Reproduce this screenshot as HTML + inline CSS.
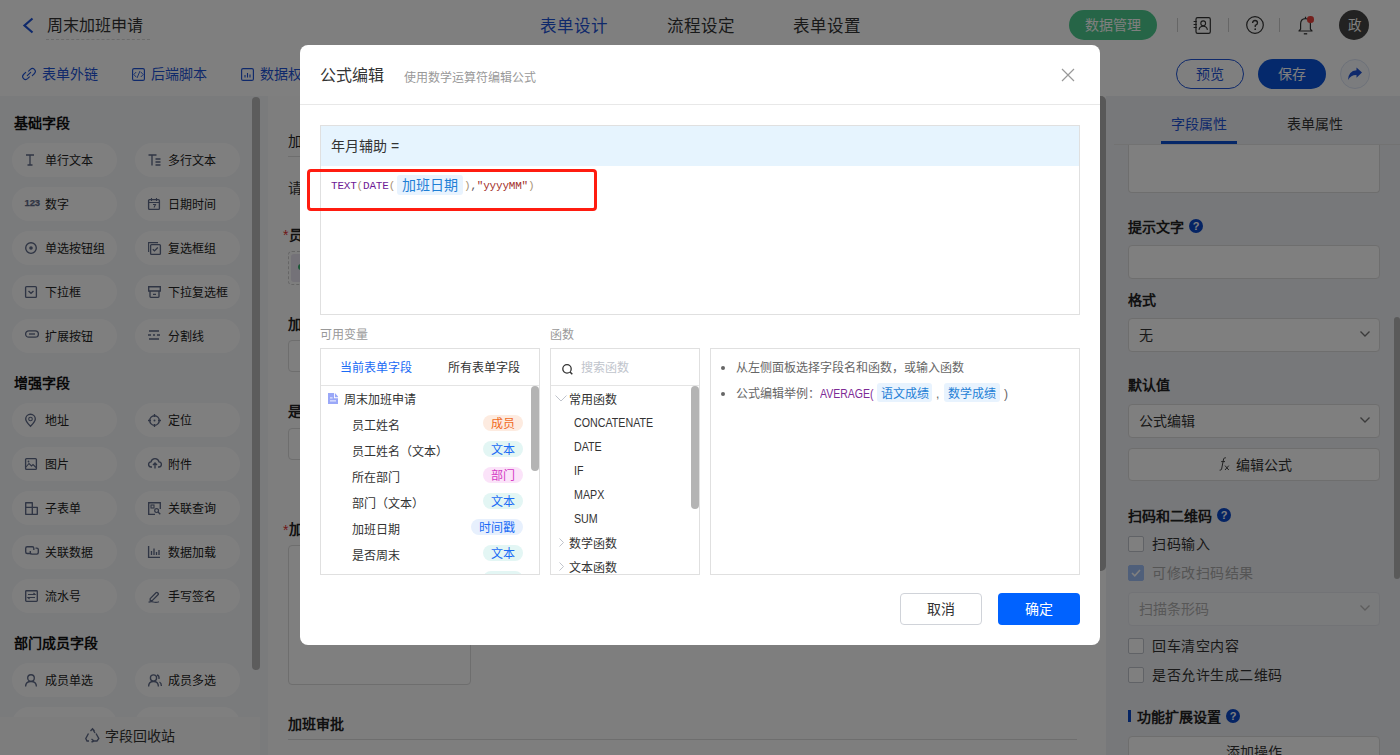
<!DOCTYPE html>
<html lang="zh-CN">
<head>
<meta charset="utf-8">
<style>
*{box-sizing:border-box;margin:0;padding:0}
html,body{width:1400px;height:755px;overflow:hidden;background:#fff}
body{font-family:"Liberation Sans",sans-serif;color:#333;position:relative;font-size:14px}
.abs{position:absolute}
.t{position:absolute;white-space:nowrap;line-height:1}
svg{position:absolute;overflow:visible}
/* top bar */
#top{left:0;top:0;width:1400px;height:51px;background:#fff;border-bottom:1px solid #ebebeb}
#bar2{left:0;top:50px;width:1400px;height:46px;background:#fff}
#side{left:0;top:96px;width:268px;height:659px;background:#f5f6f9}
#center{left:268px;top:96px;width:838px;height:659px;background:#fcfcfd}
#right{left:1106px;top:96px;width:294px;height:659px;background:#eff0f4}
.chip{position:absolute;width:105px;height:34px;border-radius:17px;background:#fff}
.chip span{position:absolute;left:33px;top:12px;font-size:12px;line-height:12px;color:#222}
.chip svg{left:13px;top:11px}
.sec{position:absolute;left:14px;font-size:14px;font-weight:bold;color:#111;line-height:14px}
.lbl{position:absolute;font-size:14px;font-weight:bold;color:#222;line-height:14px}
.inp{position:absolute;background:#fff;border:1px solid #dcdcdc;border-radius:4px}
.cb{position:absolute;width:16px;height:16px;border:1px solid #c0c4cc;border-radius:2px;background:#fff}
.qm{position:absolute;width:14px;height:14px;border-radius:7px;background:#0a48c8;color:#fff;font-size:11px;font-weight:bold;line-height:14px;text-align:center}
#overlay{left:0;top:0;width:1400px;height:755px;background:rgba(0,0,0,.5)}
#modal{left:300px;top:45px;width:800px;height:600px;background:#fff;border-radius:8px}
.tag{position:absolute;height:16px;border-radius:8px;font-size:12px;line-height:19px;text-align:center}
.vr{position:absolute;left:31px;font-size:12px;line-height:12px;color:#333}
.fn{position:absolute;left:23px;margin-top:-1px;font-size:12px;line-height:12px;color:#333;transform:scaleX(0.89);transform-origin:0 0}
</style>
</head>
<body>
<!-- ============ underlying page ============ -->
<div id="top" class="abs">
  <svg style="left:22px;top:17px" width="12" height="17" viewBox="0 0 12 17"><path d="M10.5 1.5 L2.5 8.5 L10.5 15.5" fill="none" stroke="#1e53d6" stroke-width="2.2"/></svg>
  <div class="t" style="left:47px;top:18px;font-size:16px;color:#333">周末加班申请</div>
  <div class="abs" style="left:46px;top:39px;width:104px;border-top:1px dashed #d8d8d8"></div>
  <div class="t" style="left:540px;top:18px;font-size:16.5px;color:#1e53d6">表单设计</div>
  <div class="t" style="left:667px;top:18px;font-size:16.5px;color:#333">流程设定</div>
  <div class="t" style="left:793px;top:18px;font-size:16.5px;color:#333">表单设置</div>
  <div class="abs" style="left:1069px;top:10px;width:88px;height:30px;border-radius:15px;background:#4ccb8e"></div>
  <div class="t" style="left:1085px;top:18px;font-size:14px;color:#fff">数据管理</div>
  <div class="abs" style="left:1177px;top:18px;width:1px;height:14px;background:#ccc"></div>
  <div class="abs" style="left:1228px;top:18px;width:1px;height:14px;background:#ccc"></div>
  <div class="abs" style="left:1279px;top:18px;width:1px;height:14px;background:#ccc"></div>
  <svg style="left:1193px;top:17px" width="18" height="17" viewBox="0 0 18 17"><rect x="3" y="0.7" width="14.3" height="15.6" rx="1.6" fill="none" stroke="#333" stroke-width="1.2"/><circle cx="10.2" cy="6.3" r="2.4" fill="none" stroke="#333" stroke-width="1.1"/><path d="M6 12.8 Q6.5 9.3 10.2 9.3 Q13.9 9.3 14.4 12.8" fill="none" stroke="#333" stroke-width="1.1"/><path d="M0.6 4.5h3.2M0.6 7.5h3.2M0.6 10.5h3.2" stroke="#333" stroke-width="1"/></svg>
  <svg style="left:1246px;top:16px" width="18" height="18" viewBox="0 0 18 18"><circle cx="9" cy="9" r="8.3" fill="none" stroke="#333" stroke-width="1.2"/><path d="M6.6 7.1 Q6.6 4.5 9 4.5 Q11.5 4.5 11.5 6.9 Q11.5 8.3 9.3 9.3 L9.2 11" fill="none" stroke="#333" stroke-width="1.3"/><circle cx="9.2" cy="13.2" r="0.85" fill="#333"/></svg>
  <svg style="left:1298px;top:16px" width="15" height="19" viewBox="0 0 15 19"><path d="M7.5 0.8v1.5M1 15 L2.6 13.2 L2.6 8 Q2.6 2.6 7.5 2.6 Q12.4 2.6 12.4 8 L12.4 13.2 L14 15 Z" fill="none" stroke="#333" stroke-width="1.2" stroke-linejoin="round"/><path d="M5.8 17.8h3.4" stroke="#333" stroke-width="1.3"/></svg>
  <div class="abs" style="left:1307px;top:16px;width:6.5px;height:6.5px;border-radius:3.25px;background:#e8413a"></div>
  <div class="abs" style="left:1339px;top:10px;width:30px;height:30px;border-radius:15px;background:#444"></div>
  <div class="t" style="left:1347.5px;top:18.5px;font-size:13.5px;color:#fff">政</div>
</div>
<div id="bar2" class="abs">
  <svg style="left:23px;top:68px;top:18px" width="12" height="12" viewBox="0 0 12 12"><path d="M5.6 3.2 L7.4 1.4 A2.9 2.9 0 0 1 11.5 5.5 L9.3 7.7 M6.4 8.8 L4.6 10.6 A2.9 2.9 0 0 1 0.5 6.5 L2.7 4.3 M4.3 7.7 L7.7 4.3" fill="none" stroke="#1e53d6" stroke-width="1.1" stroke-linecap="round"/></svg>
  <div class="t" style="left:42px;top:17px;font-size:14px;color:#1e53d6">表单外链</div>
  <svg style="left:132px;top:18px" width="13" height="13" viewBox="0 0 13 13"><rect x="0.6" y="0.6" width="11.8" height="11.8" rx="1.5" fill="none" stroke="#1e53d6" stroke-width="1.15"/><path d="M4.2 4 L1.8 6.5 L4.2 9 M8.8 4 L11.2 6.5 L8.8 9 M8 3 L5 10" fill="none" stroke="#1e53d6" stroke-width="0.9"/></svg>
  <div class="t" style="left:151px;top:17px;font-size:14px;color:#1e53d6">后端脚本</div>
  <svg style="left:241px;top:18px" width="13" height="13" viewBox="0 0 13 13"><rect x="0.6" y="0.6" width="11.8" height="11.8" rx="1.5" fill="none" stroke="#1e53d6" stroke-width="1.15"/><path d="M4 9.5v-2.5M6.5 9.5v-4.5M9 9.5v-3" stroke="#1e53d6" stroke-width="1.1"/></svg>
  <div class="t" style="left:260px;top:17px;font-size:14px;color:#1e53d6">数据权限</div>
  <div class="abs" style="left:1176px;top:9px;width:68px;height:30px;border-radius:15px;border:1px solid #1e53d6"></div>
  <div class="t" style="left:1196px;top:17px;font-size:14px;color:#1e53d6">预览</div>
  <div class="abs" style="left:1258px;top:9px;width:68px;height:30px;border-radius:15px;background:#0a52d8"></div>
  <div class="t" style="left:1278px;top:17px;font-size:14px;color:#fff">保存</div>
  <div class="abs" style="left:1340px;top:9px;width:30px;height:30px;border-radius:15px;border:1px solid #dbe3f3;background:#f6f8fd"></div>
  <svg style="left:1347px;top:17px" width="16" height="14" viewBox="0 0 16 14"><path d="M15 5.5 L9.5 0.5 L9.5 3.3 Q1.5 3.8 1 13 Q4 7.8 9.5 8 L9.5 10.8 Z" fill="#1e53d6"/></svg>
</div>

<div id="side" class="abs">
  <div class="sec" style="top:20px">基础字段</div>
  <div class="chip" style="left:12px;top:47px"><svg width="10" height="12" viewBox="0 0 10 12"><path d="M1 1h8M5 1v10M2.5 11h5" stroke="#5f6a88" stroke-width="1.3" fill="none"/></svg><span>单行文本</span></div>
  <div class="chip" style="left:135px;top:47px"><svg width="13" height="12" viewBox="0 0 13 12"><path d="M0.5 1h8M4 1v10.5M7.5 5h5M7.5 8h5M7.5 11h5" stroke="#5f6a88" stroke-width="1.35" fill="none"/></svg><span>多行文本</span></div>
  <div class="chip" style="left:12px;top:91px"><div class="t" style="left:12.5px;top:11px;font-size:9.5px;font-weight:bold;color:#5f6a88;letter-spacing:-0.1px;-webkit-text-stroke:0.25px #5f6a88">123</div><span>数字</span></div>
  <div class="chip" style="left:135px;top:91px"><svg width="12" height="12" viewBox="0 0 12 12"><rect x="0.6" y="1.6" width="10.8" height="9.8" rx="1" fill="none" stroke="#5f6a88" stroke-width="1.35"/><path d="M0.6 4.5h10.8M3.5 0v3M8.5 0v3M5 6.5h2.5l-1.5 3" stroke="#5f6a88" stroke-width="1.1" fill="none"/></svg><span>日期时间</span></div>
  <div class="chip" style="left:12px;top:135px"><svg width="12" height="12" viewBox="0 0 12 12"><circle cx="6" cy="6" r="5.3" fill="none" stroke="#5f6a88" stroke-width="1.35"/><circle cx="6" cy="6" r="1.8" fill="#5f6a88"/></svg><span>单选按钮组</span></div>
  <div class="chip" style="left:135px;top:135px"><svg width="13" height="13" viewBox="0 0 13 13"><path d="M0.6 10V0.6H10" fill="none" stroke="#5f6a88" stroke-width="1.1"/><rect x="2.6" y="2.6" width="9.8" height="9.8" rx="1" fill="none" stroke="#5f6a88" stroke-width="1.35"/><path d="M4.8 7.2l1.7 1.7 3.3-3.3" fill="none" stroke="#5f6a88" stroke-width="1.35"/></svg><span>复选框组</span></div>
  <div class="chip" style="left:12px;top:179px"><svg width="12" height="12" viewBox="0 0 12 12"><rect x="0.6" y="0.6" width="10.8" height="10.8" rx="1" fill="none" stroke="#5f6a88" stroke-width="1.35"/><path d="M3.5 5l2.5 2.3L8.5 5" fill="none" stroke="#5f6a88" stroke-width="1.35"/></svg><span>下拉框</span></div>
  <div class="chip" style="left:135px;top:179px"><svg width="13" height="12" viewBox="0 0 13 12"><path d="M0.7 0.7H12.3V5H0.7Z" fill="none" stroke="#5f6a88" stroke-width="1.35"/><path d="M2 5V10.5Q2 11.3 2.8 11.3H10.2Q11 11.3 11 10.5V5 M5 8.3H8" fill="none" stroke="#5f6a88" stroke-width="1.35"/></svg><span>下拉复选框</span></div>
  <div class="chip" style="left:12px;top:223px"><svg width="14" height="8" viewBox="0 0 14 8"><rect x="0.6" y="0.8" width="12.8" height="6.4" rx="3.2" fill="none" stroke="#5f6a88" stroke-width="1.3"/><path d="M4 4h6" stroke="#5f6a88" stroke-width="1.35"/></svg><span>扩展按钮</span></div>
  <div class="chip" style="left:135px;top:223px"><svg width="12" height="10" viewBox="0 0 12 10"><path d="M1 1h10M0 5h3M5 5h2M9 5h3M1 9h10" stroke="#5f6a88" stroke-width="1.35"/></svg><span>分割线</span></div>

  <div class="sec" style="top:280px">增强字段</div>
  <div class="chip" style="left:12px;top:307px"><svg width="11" height="13" viewBox="0 0 11 13"><path d="M5.5 12.3 Q0.7 7.5 0.7 5 A4.8 4.8 0 0 1 10.3 5 Q10.3 7.5 5.5 12.3Z" fill="none" stroke="#5f6a88" stroke-width="1.35"/><circle cx="5.5" cy="5" r="1.8" fill="none" stroke="#5f6a88" stroke-width="1.1"/></svg><span>地址</span></div>
  <div class="chip" style="left:135px;top:307px"><svg width="13" height="13" viewBox="0 0 13 13"><circle cx="6.5" cy="6.5" r="4.8" fill="none" stroke="#5f6a88" stroke-width="1.35"/><path d="M6.5 0v3M6.5 10v3M0 6.5h3M10 6.5h3" stroke="#5f6a88" stroke-width="1.35"/><circle cx="6.5" cy="6.5" r="1" fill="#5f6a88"/></svg><span>定位</span></div>
  <div class="chip" style="left:12px;top:351px"><svg width="12" height="12" viewBox="0 0 12 12"><rect x="0.6" y="0.6" width="10.8" height="10.8" rx="1" fill="none" stroke="#5f6a88" stroke-width="1.35"/><path d="M1 9l3-3.5 2.5 2.5 1.5-1.5 3 3" fill="none" stroke="#5f6a88" stroke-width="1.1"/><circle cx="3.5" cy="3.5" r="0.9" fill="#5f6a88"/></svg><span>图片</span></div>
  <div class="chip" style="left:135px;top:351px"><svg width="14" height="11" viewBox="0 0 14 11"><path d="M4 9H3Q0.6 9 0.6 6.3 Q0.6 4 3 3.8 Q3.8 0.6 7 0.6 Q10.2 0.6 11 3.8 Q13.4 4 13.4 6.3 Q13.4 9 11 9H10M7 10.5V5M5 7l2-2 2 2" fill="none" stroke="#5f6a88" stroke-width="1.35"/></svg><span>附件</span></div>
  <div class="chip" style="left:12px;top:395px"><svg width="13" height="13" viewBox="0 0 13 13"><path d="M0.7 0.7H7.3V5.3H12.3V12.3H0.7Z M0.7 5.3H7.3V12.3" fill="none" stroke="#5f6a88" stroke-width="1.35" stroke-linejoin="round"/></svg><span>子表单</span></div>
  <div class="chip" style="left:135px;top:395px"><svg width="13" height="13" viewBox="0 0 13 13"><path d="M12.3 7V0.7H0.7V12.3H7" fill="none" stroke="#5f6a88" stroke-width="1.35"/><rect x="3" y="3" width="3" height="3" fill="none" stroke="#5f6a88" stroke-width="1.1"/><circle cx="8.6" cy="8.6" r="1.9" fill="none" stroke="#5f6a88" stroke-width="1.2"/><path d="M10 10l2.3 2.3" stroke="#5f6a88" stroke-width="1.3"/></svg><span>关联查询</span></div>
  <div class="chip" style="left:12px;top:439px"><svg width="14" height="9" viewBox="0 0 14 9"><path d="M6 7.5H2.2Q0.7 7.5 0.7 6V2.2Q0.7 0.7 2.2 0.7H7.3Q8.8 0.7 8.8 2.2V4" fill="none" stroke="#5f6a88" stroke-width="1.35"/><path d="M5.3 5V6.6Q5.3 8.1 6.8 8.1H11.8Q13.3 8.1 13.3 6.6V3.6Q13.3 2.1 11.8 2.1H10.5" fill="none" stroke="#5f6a88" stroke-width="1.35"/></svg><span>关联数据</span></div>
  <div class="chip" style="left:135px;top:439px"><svg width="12" height="12" viewBox="0 0 12 12"><path d="M0.6 0v11.4H12M3.5 9V5M6 9V2.5M8.5 9V6M11 9V4" fill="none" stroke="#5f6a88" stroke-width="1.35"/></svg><span>数据加载</span></div>
  <div class="chip" style="left:12px;top:483px"><svg width="13" height="12" viewBox="0 0 13 12"><rect x="0.7" y="0.7" width="11.6" height="10.6" rx="0.8" fill="none" stroke="#5f6a88" stroke-width="1.35"/><path d="M3 4.5H10L8.5 3 M10 7.5H3L4.5 9" fill="none" stroke="#5f6a88" stroke-width="1.1"/></svg><span>流水号</span></div>
  <div class="chip" style="left:135px;top:483px"><svg width="12" height="13" viewBox="0 0 12 13"><path d="M2.2 8.6 L8 2.8 Q8.8 2 9.6 2.8 L10 3.2 Q10.8 4 10 4.8 L4.2 10.6 H2.2Z" fill="none" stroke="#5f6a88" stroke-width="1.3" stroke-linejoin="round"/><path d="M0.5 12.3 Q3 11 5.5 12 Q8 12.8 11 11.8" fill="none" stroke="#5f6a88" stroke-width="1.2"/></svg><span>手写签名</span></div>

  <div class="sec" style="top:540px">部门成员字段</div>
  <div class="chip" style="left:12px;top:567px"><svg width="12" height="13" viewBox="0 0 12 13"><circle cx="6" cy="4" r="3.3" fill="none" stroke="#5f6a88" stroke-width="1.35"/><path d="M0.6 12.5 Q0.6 7.5 6 7.5 Q11.4 7.5 11.4 12.5" fill="none" stroke="#5f6a88" stroke-width="1.35"/></svg><span>成员单选</span></div>
  <div class="chip" style="left:135px;top:567px"><svg width="14" height="13" viewBox="0 0 14 13"><circle cx="5.5" cy="4" r="3.1" fill="none" stroke="#5f6a88" stroke-width="1.35"/><path d="M0.6 12.5 Q0.6 7.5 5.5 7.5 Q10.4 7.5 10.4 12.5M9 1 Q11.5 1.5 11 5M11.5 8 Q13.4 9 13.4 12" fill="none" stroke="#5f6a88" stroke-width="1.35"/></svg><span>成员多选</span></div>
  <div class="chip" style="left:12px;top:611px"></div>
  <div class="chip" style="left:135px;top:611px"></div>
  <div class="abs" style="left:252px;top:1px;width:8px;height:573px;border-radius:4px;background:#b8b8b8"></div>
  <div class="abs" style="left:0;top:621px;width:260px;height:38px;background:#fafafa"></div>
  <svg style="left:85px;top:632px" width="15" height="14" viewBox="0 0 15 14"><path d="M5.5 3 L7.5 0.8 L9.5 3 M11 5.5 L13.8 10.5 L12 13 H9 M4 13 H2 L0.8 10.5 L3.5 5.5 M7.5 0.8 L10 5 M9 13 L6.5 11 M9 13 L6.5 14" fill="none" stroke="#5f6a88" stroke-width="1.35"/></svg>
  <div class="t" style="left:105px;top:633px;font-size:14px;color:#333">字段回收站</div>
</div>

<div id="center" class="abs">
  <div class="lbl" style="left:20px;top:38px;font-weight:normal;color:#222">加班申请</div>
  <div class="abs" style="left:20px;top:60px;width:800px;border-top:1px solid #ddd"></div>
  <div class="t" style="left:20px;top:85px;font-size:14px;color:#333">请填写加班信息</div>
  <div class="t" style="left:15px;top:132px;font-size:14px;color:#e03030">*</div>
  <div class="lbl" style="left:21px;top:132px">员工姓名</div>
  <div class="abs" style="left:20px;top:155px;width:200px;height:34px;border:1px dashed #ccc;border-radius:4px"></div>
  <div class="abs" style="left:23px;top:158px;width:90px;height:28px;background:#e9e4f0;border-radius:3px"></div>
  <div class="abs" style="left:30px;top:168px;width:6px;height:6px;background:#3bb070;border-radius:3px"></div>
  <div class="lbl" style="left:20px;top:221px">加班日期</div>
  <div class="inp" style="left:20px;top:244px;width:182px;height:32px"></div>
  <div class="lbl" style="left:20px;top:308px">是否周末</div>
  <div class="inp" style="left:20px;top:332px;width:182px;height:32px"></div>
  <div class="t" style="left:15px;top:427px;font-size:14px;color:#e03030">*</div>
  <div class="lbl" style="left:21px;top:426px">加班事由</div>
  <div class="inp" style="left:20px;top:449px;width:183px;height:140px"></div>
  <div class="lbl" style="left:20px;top:621px">加班审批</div>
  <div class="abs" style="left:20px;top:643px;width:789px;border-top:1px solid #ddd"></div>
  <div class="abs" style="left:826px;top:0;width:12px;height:475px;border-radius:5px;background:#b0b0b0"></div>
</div>

<div id="right" class="abs">
  <div class="t" style="left:65px;top:21px;font-size:14px;color:#1e53d6">字段属性</div>
  <div class="t" style="left:181px;top:21px;font-size:14px;color:#333">表单属性</div>
  <div class="inp" style="left:22px;top:49px;width:252px;height:48px;border-top:none;border-radius:0 0 4px 4px"></div>
  <div class="abs" style="left:8px;top:48px;width:286px;border-top:1px solid #e4e4e4"></div>
  <div class="abs" style="left:55px;top:45px;width:76px;height:3px;background:#0a4fd0"></div>
  <div class="lbl" style="left:22px;top:124px">提示文字</div>
  <div class="qm" style="left:83px;top:123px">?</div>
  <div class="inp" style="left:22px;top:149px;width:252px;height:34px"></div>
  <div class="lbl" style="left:22px;top:197px">格式</div>
  <div class="inp" style="left:22px;top:222px;width:252px;height:34px"></div>
  <div class="t" style="left:33px;top:232px;font-size:14px;color:#333">无</div>
  <svg style="left:254px;top:235px" width="10" height="6" viewBox="0 0 10 6"><path d="M0.5 0.5l4.5 4.5 4.5-4.5" fill="none" stroke="#777" stroke-width="1.35"/></svg>
  <div class="lbl" style="left:22px;top:282px">默认值</div>
  <div class="inp" style="left:22px;top:308px;width:252px;height:34px"></div>
  <div class="t" style="left:33px;top:318px;font-size:14px;color:#333">公式编辑</div>
  <svg style="left:254px;top:321px" width="10" height="6" viewBox="0 0 10 6"><path d="M0.5 0.5l4.5 4.5 4.5-4.5" fill="none" stroke="#777" stroke-width="1.35"/></svg>
  <div class="inp" style="left:22px;top:352px;width:252px;height:33px"></div>
  <svg style="left:112px;top:361px" width="12" height="14" viewBox="0 0 12 14"><path d="M7.8 0.8 Q6.3 0.3 5.6 2 L3.6 12 Q3 13.6 1.6 13.2 M3.2 4.6 H7" fill="none" stroke="#444" stroke-width="1"/><path d="M7 8.6 L10.8 13 M10.8 8.6 L7 13" fill="none" stroke="#444" stroke-width="1"/></svg>
  <div class="t" style="left:130px;top:362px;font-size:14px;color:#333">编辑公式</div>
  <div class="lbl" style="left:22px;top:413px">扫码和二维码</div>
  <div class="qm" style="left:111px;top:412px">?</div>
  <div class="cb" style="left:22px;top:440px"></div>
  <div class="t" style="left:46px;top:441px;font-size:14px;color:#333;letter-spacing:0.5px">扫码输入</div>
  <div class="cb" style="left:22px;top:469px;background:#9fbef5;border-color:#9fbef5"></div>
  <svg style="left:25px;top:473px" width="10" height="8" viewBox="0 0 10 8"><path d="M1 4l2.8 2.8L9 1" fill="none" stroke="#fff" stroke-width="1.6"/></svg>
  <div class="t" style="left:46px;top:470px;font-size:14px;color:#aaa;letter-spacing:0.5px">可修改扫码结果</div>
  <div class="inp" style="left:22px;top:496px;width:252px;height:34px;background:#f5f6f8;border-color:#e4e7ed"></div>
  <div class="t" style="left:33px;top:506px;font-size:14px;color:#b0b0b0">扫描条形码</div>
  <svg style="left:254px;top:509px" width="10" height="6" viewBox="0 0 10 6"><path d="M0.5 0.5l4.5 4.5 4.5-4.5" fill="none" stroke="#bbb" stroke-width="1.35"/></svg>
  <div class="cb" style="left:22px;top:542px"></div>
  <div class="t" style="left:46px;top:543px;font-size:14px;color:#333;letter-spacing:0.5px">回车清空内容</div>
  <div class="cb" style="left:22px;top:571px"></div>
  <div class="t" style="left:46px;top:572px;font-size:14px;color:#333;letter-spacing:0.5px">是否允许生成二维码</div>
  <div class="abs" style="left:22px;top:614px;width:3px;height:12px;background:#0a48c8"></div>
  <div class="lbl" style="left:31px;top:614px">功能扩展设置</div>
  <div class="qm" style="left:120px;top:613px">?</div>
  <div class="inp" style="left:22px;top:640px;width:252px;height:34px"></div>
  <div class="t" style="left:120px;top:649px;font-size:14px;color:#333">添加操作</div>
  <div class="abs" style="left:288px;top:221px;width:6px;height:262px;border-radius:3px;background:#b5b5b5"></div>
</div>

<div id="overlay" class="abs"></div>

<!-- ============ modal ============ -->
<div id="modal" class="abs">
  <div class="t" style="left:20px;top:23px;font-size:16px;color:#333">公式编辑</div>
  <div class="t" style="left:104px;top:27px;font-size:12px;color:#999">使用数学运算符编辑公式</div>
  <svg style="left:761px;top:23px" width="14" height="14" viewBox="0 0 14 14"><path d="M1 1L13 13M13 1L1 13" stroke="#999" stroke-width="1.2"/></svg>
  <div class="abs" style="left:0;top:59px;width:800px;border-top:1px solid #e8e8e8"></div>

  <!-- editor -->
  <div class="abs" style="left:20px;top:80px;width:760px;height:190px;border:1px solid #e0e0e0"></div>
  <div class="abs" style="left:21px;top:81px;width:758px;height:40px;background:#e6f4fe"></div>
  <div class="t" style="left:31px;top:94px;font-size:14px;color:#333">年月辅助 =</div>
  <div class="t" style="left:31px;top:134.5px;font-family:'Liberation Mono',monospace;font-size:11px;letter-spacing:-0.2px;line-height:12px;color:#6e1a96">TEXT<span style="color:#a89378">(</span>DATE<span style="color:#a89378">(</span></div>
  <div class="abs" style="left:97px;top:130px;width:66px;height:20px;background:#e8f3fe;border-radius:3px"></div>
  <div class="t" style="left:102px;top:133px;font-size:14px;color:#1f7fd6">加班日期</div>
  <div class="t" style="left:164px;top:134.5px;font-family:'Liberation Mono',monospace;font-size:11px;letter-spacing:-0.2px;line-height:12px;color:#a89378">)<span style="color:#555">,</span><span style="color:#a3302a">"yyyyMM"</span>)</div>
  <div class="abs" style="left:7px;top:124px;width:290px;height:42px;border:3px solid #ff1c10;border-radius:4px"></div>

  <!-- labels -->
  <div class="t" style="left:20px;top:284px;font-size:12px;color:#999">可用变量</div>
  <div class="t" style="left:250px;top:284px;font-size:12px;color:#999">函数</div>

  <!-- variable panel -->
  <div class="abs" style="left:20px;top:303px;width:220px;height:227px;border:1px solid #e0e0e0;overflow:hidden">
    <div class="t" style="left:19px;top:13px;font-size:12px;color:#1a6bf5">当前表单字段</div>
    <div class="t" style="left:127px;top:13px;font-size:12px;color:#333">所有表单字段</div>
    <div class="abs" style="left:0;top:36px;width:220px;border-top:1px solid #e4e4e4"></div>
    <svg style="left:7px;top:44px" width="10" height="11" viewBox="0 0 10 11"><path d="M0 0H6V5.2H10V11H0Z" fill="#9aa8f8"/><path d="M6.9 0L10 3.6V4.3H6.9Z" fill="#9aa8f8"/><path d="M2 4.9h2.6M2 7.9h6" stroke="#fff" stroke-width="0.9"/></svg>
    <div class="vr" style="left:23px;top:45px">周末加班申请</div>
    <div class="vr" style="top:71px">员工姓名</div>
    <div class="tag" style="left:162px;top:66px;width:40px;background:#fdebe0;color:#f06a24">成员</div>
    <div class="vr" style="top:97px">员工姓名（文本）</div>
    <div class="tag" style="left:162px;top:92px;width:40px;background:#e3f6f4;color:#1a6bf5">文本</div>
    <div class="vr" style="top:123px">所在部门</div>
    <div class="tag" style="left:162px;top:118px;width:40px;background:#fbe3f9;color:#d43bc4">部门</div>
    <div class="vr" style="top:149px">部门（文本）</div>
    <div class="tag" style="left:162px;top:144px;width:40px;background:#e3f6f4;color:#1a6bf5">文本</div>
    <div class="vr" style="top:175px">加班日期</div>
    <div class="tag" style="left:150px;top:170px;width:52px;background:#e7f0fd;color:#1a6bf5">时间戳</div>
    <div class="vr" style="top:201px">是否周末</div>
    <div class="tag" style="left:162px;top:196px;width:40px;background:#e3f6f4;color:#1a6bf5">文本</div>
    <div class="tag" style="left:162px;top:222px;width:40px;background:#e3f6f4"></div>
    <div class="abs" style="left:210px;top:37px;width:8px;height:85px;border-radius:4px;background:#b4b4b4"></div>
  </div>

  <!-- function panel -->
  <div class="abs" style="left:250px;top:303px;width:150px;height:227px;border:1px solid #e0e0e0;overflow:hidden">
    <svg style="left:11px;top:15px" width="11" height="11" viewBox="0 0 11 11"><circle cx="5" cy="4.9" r="4.2" fill="none" stroke="#333" stroke-width="1.3"/><path d="M8 8L10.3 10.3" stroke="#333" stroke-width="1.5"/></svg>
    <div class="t" style="left:30px;top:13px;font-size:12px;color:#c0c4cc">搜索函数</div>
    <div class="abs" style="left:0;top:36px;width:150px;border-top:1px solid #e4e4e4"></div>
    <svg style="left:4px;top:46px" width="12" height="7" viewBox="0 0 12 7"><path d="M0.5 0.5l5.5 5.5 5.5-5.5" fill="none" stroke="#c0c4cc" stroke-width="1"/></svg>
    <div class="t" style="left:18px;top:45px;font-size:12px;color:#333">常用函数</div>
    <div class="fn" style="top:69px">CONCATENATE</div>
    <div class="fn" style="top:93px">DATE</div>
    <div class="fn" style="top:117px">IF</div>
    <div class="fn" style="top:141px">MAPX</div>
    <div class="fn" style="top:165px">SUM</div>
    <svg style="left:8px;top:189px" width="5" height="9" viewBox="0 0 5 9"><path d="M0.5 0.5l4 4-4 4" fill="none" stroke="#c0c4cc" stroke-width="1"/></svg>
    <div class="t" style="left:18px;top:189px;font-size:12px;color:#333">数学函数</div>
    <svg style="left:8px;top:213px" width="5" height="9" viewBox="0 0 5 9"><path d="M0.5 0.5l4 4-4 4" fill="none" stroke="#c0c4cc" stroke-width="1"/></svg>
    <div class="t" style="left:18px;top:213px;font-size:12px;color:#333">文本函数</div>
    <div class="abs" style="left:140px;top:37px;width:8px;height:123px;border-radius:4px;background:#b4b4b4"></div>
  </div>

  <!-- description panel -->
  <div class="abs" style="left:410px;top:303px;width:370px;height:227px;border:1px solid #e0e0e0">
    <div class="abs" style="left:10px;top:17px;width:4px;height:4px;border-radius:2px;background:#666"></div>
    <div class="t" style="left:25px;top:13px;font-size:12px;color:#666">从左侧面板选择字段名和函数，或输入函数</div>
    <div class="abs" style="left:10px;top:43px;width:4px;height:4px;border-radius:2px;background:#666"></div>
    <div class="t" style="left:25px;top:39px;font-size:12px;color:#666">公式编辑举例：</div>
    <div class="t" style="left:109px;top:39px;font-size:12px;color:#7d2a96;font-size:12.5px;top:38.5px;transform:scaleX(0.84);transform-origin:0 0">AVERAGE(</div>
    <div class="abs" style="left:166px;top:34px;width:55px;height:19px;background:#e8f3fe;border-radius:3px"></div>
    <div class="t" style="left:170px;top:39px;font-size:12px;color:#1f7fd6">语文成绩</div>
    <div class="t" style="left:225px;top:39px;font-size:12px;color:#666">,</div>
    <div class="abs" style="left:233px;top:34px;width:56px;height:19px;background:#e8f3fe;border-radius:3px"></div>
    <div class="t" style="left:237px;top:39px;font-size:12px;color:#1f7fd6">数学成绩</div>
    <div class="t" style="left:293px;top:39px;font-size:12px;color:#666">)</div>
  </div>

  <!-- buttons -->
  <div class="abs" style="left:600px;top:548px;width:82px;height:32px;border:1px solid #d0d3d9;border-radius:4px;background:#fff"></div>
  <div class="t" style="left:627px;top:557px;font-size:14px;color:#333">取消</div>
  <div class="abs" style="left:698px;top:548px;width:82px;height:32px;border-radius:4px;background:#0062ff"></div>
  <div class="t" style="left:725px;top:557px;font-size:14px;color:#fff">确定</div>
</div>
</body>
</html>
